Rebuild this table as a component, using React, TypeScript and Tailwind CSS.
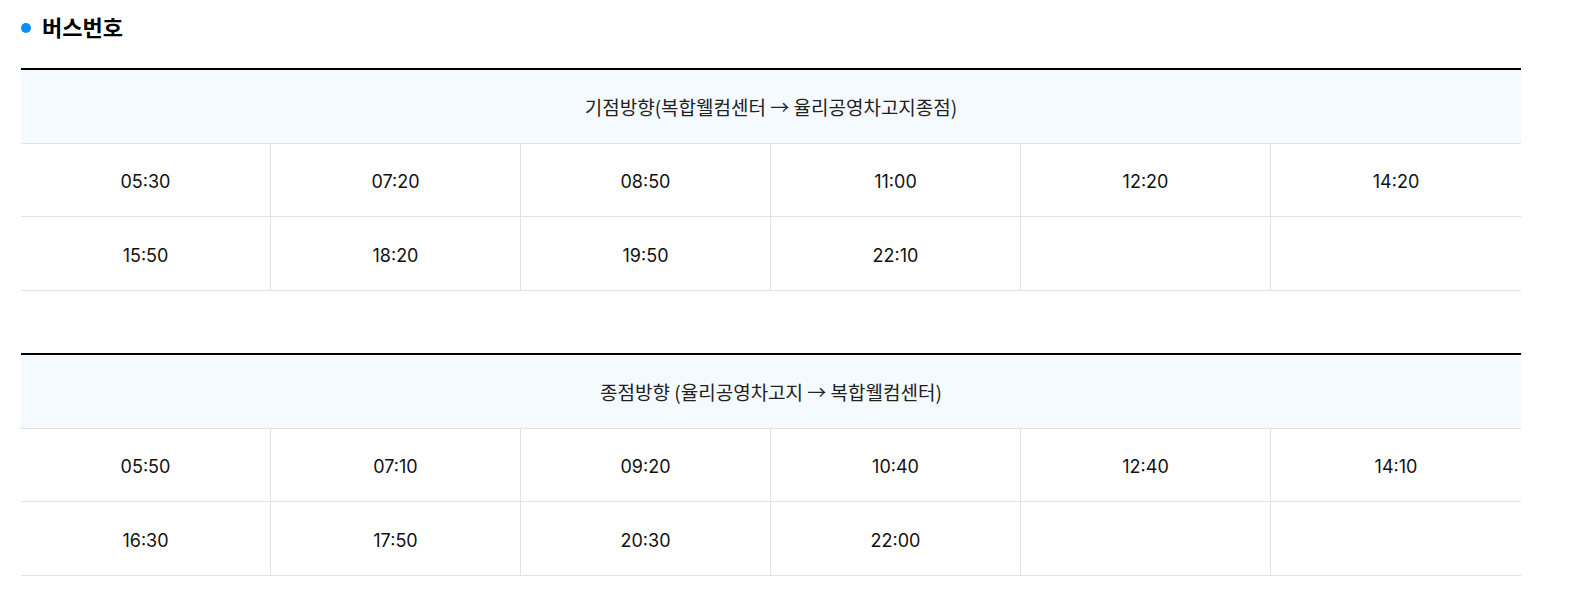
const font = { fontFamily: '"Inter", "Noto Sans CJK KR", sans-serif' };

const tables = [
  {
    title: "기점방향(복합웰컴센터 → 율리공영차고지종점)",
    times: ["05:30", "07:20", "08:50", "11:00", "12:20", "14:20", "15:50", "18:20", "19:50", "22:10", "", ""],
  },
  {
    title: "종점방향 (율리공영차고지 → 복합웰컴센터)",
    times: ["05:50", "07:10", "09:20", "10:40", "12:40", "14:10", "16:30", "17:50", "20:30", "22:00", "", ""],
  },
];

function Timetable({ title, times }: { title: string; times: string[] }) {
  return (
    <div className="w-[1500px] border-t-2 border-black">
      <div className="flex h-[74px] items-center justify-center border-b border-[#e2e2e2] bg-[#f5fafe] pt-[2px] font-['Noto_Sans_CJK_KR',sans-serif] text-[19px] text-[#222]">
        {title}
      </div>
      <div className="grid grid-cols-6">
        {times.map((t, i) => (
          <div
            key={i}
            className={`flex items-center justify-center border-b border-[#e2e2e2] pt-[3px] text-[18px] text-[#111] ${
              i < 6 ? "h-[73px]" : "h-[74px]"
            } ${i % 6 === 5 ? "" : "border-r"}`}
          >
            {t}
          </div>
        ))}
      </div>
    </div>
  );
}

export default function App() {
  return (
    <div className="min-h-[601px] bg-white pl-[21px] pt-[12px]" style={font}>
      <div className="flex items-center gap-[11px]">
        <span className="h-[10px] w-[10px] rounded-full bg-[#0a8cff]" />
        <h2 className="text-[22px] font-bold leading-[32px] text-black">버스번호</h2>
      </div>
      <div className="mt-[24px] flex flex-col gap-[62px]">
        {tables.map((t) => (
          <Timetable key={t.title} title={t.title} times={t.times} />
        ))}
      </div>
    </div>
  );
}
